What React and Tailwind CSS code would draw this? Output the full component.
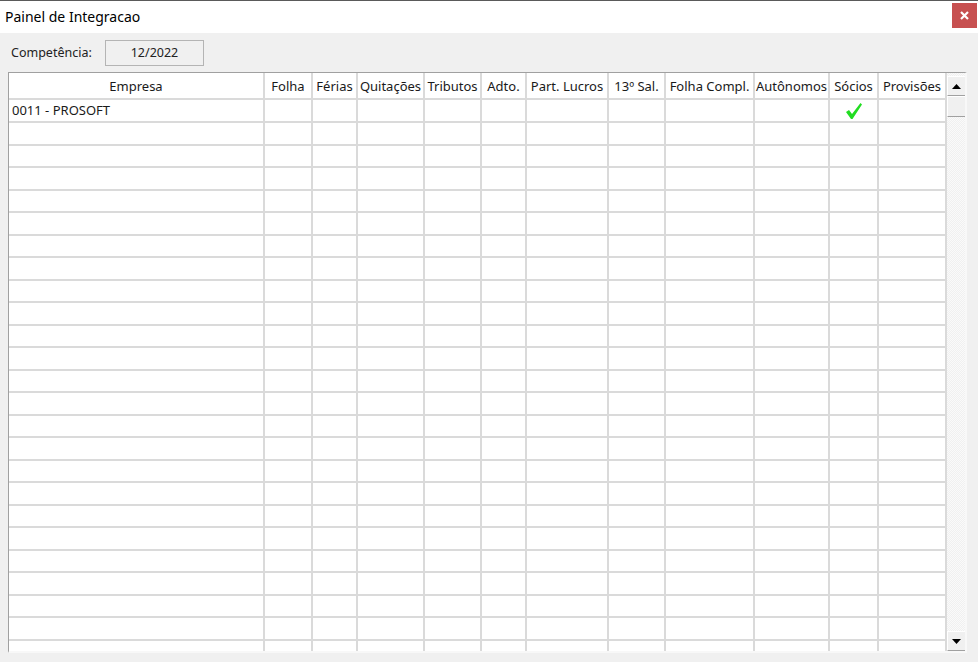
import React from "react";

const cols = [
  { name: "Empresa", w: "w-[256px]" },
  { name: "Folha", w: "w-[48px]" },
  { name: "Férias", w: "w-[45px]" },
  { name: "Quitações", w: "w-[67px]" },
  { name: "Tributos", w: "w-[57px]" },
  { name: "Adto.", w: "w-[45px]" },
  { name: "Part. Lucros", w: "w-[82px]" },
  { name: "13º Sal.", w: "w-[57px]" },
  { name: "Folha Compl.", w: "w-[89px]" },
  { name: "Autônomos", w: "w-[75px]" },
  { name: "Sócios", w: "w-[49px]" },
  { name: "Provisões", w: "w-[68px]" },
];

function Check() {
  return (
    <svg width="18" height="18" viewBox="0 0 18 18">
      <polygon points="1,10 4,8 7,12 15.5,1 17,2.5 7.5,17 6,17" fill="#22dd22" />
    </svg>
  );
}

function Row({ i }) {
  const h = i === 0 ? "h-[23px]" : i % 2 === 1 ? "h-[23px]" : "h-[22px]";
  return (
    <div className={`flex shrink-0 ${h}`}>
      {cols.map((c, j) => (
        <div
          key={j}
          className={`${c.w} shrink-0 border-r-2 border-b-2 border-[#dadada] bg-white flex items-center ${
            j === 0 ? "pl-[3px]" : "justify-center"
          }`}
        >
          {i === 0 && j === 0 ? "0011 - PROSOFT" : null}
          {i === 0 && j === 10 ? <Check /> : null}
        </div>
      ))}
    </div>
  );
}

function ScrollBtn({ up }) {
  return (
    <div className="h-[20px] w-full shrink-0 bg-[#f0f0f0] border-t border-l border-white border-r border-b border-r-[#a0a0a0] border-b-[#a0a0a0] flex items-center justify-center">
      <svg width="9" height="5" viewBox="0 0 9 5">
        {up ? (
          <polygon points="0,5 9,5 4.5,0" fill="#000" />
        ) : (
          <polygon points="0,0 9,0 4.5,5" fill="#000" />
        )}
      </svg>
    </div>
  );
}

export default function App() {
  const rows = Array.from({ length: 26 }, (_, i) => i);
  return (
    <div
      className="w-[978px] h-[662px] flex flex-col bg-[#f0f0f0] overflow-hidden text-[#1a1a1a]"
      style={{ fontFamily: '"Noto Sans", "Open Sans", sans-serif' }}
    >
      {/* title bar */}
      <div className="h-[33px] shrink-0 bg-white border-t border-[#5a5a5a] flex items-center justify-between">
        <span className="pl-[5px] text-[14px] text-black pb-[1px]">Painel de Integracao</span>
        <div className="w-[25px] h-[25px] mr-[1px] mb-[4px] bg-[#c75050] flex items-center justify-center">
          <svg width="9" height="9" viewBox="0 0 9 9">
            <path d="M1 1 L8 8 M8 1 L1 8" stroke="#fff" strokeWidth="2.2" />
          </svg>
        </div>
      </div>

      {/* body */}
      <div className="flex-1 flex flex-col pl-[8px] pt-[7px] min-h-0">
        <div className="flex items-center h-[26px] shrink-0">
          <span className="pl-[3px] w-[97px] text-[12.5px] text-[#222]">Competência:</span>
          <div className="w-[99px] h-[26px] border border-[#b4b4b4] bg-[#f0f0f0] flex items-center justify-center text-[12.5px] text-[#222]">
            12/2022
          </div>
        </div>

        <div className="mt-[6px] w-[959px] h-[581px] shrink-0 flex border-l border-t border-[#a0a0a0] border-r-2 border-b-2 border-r-[#f8f8f8] border-b-[#f8f8f8] overflow-hidden text-[13px]">
          <div className="flex flex-col w-[938px] shrink-0 overflow-hidden">
            <div className="flex h-[27px] shrink-0">
              {cols.map((c, j) => (
                <div
                  key={j}
                  className={`${c.w} shrink-0 border-r-2 border-b-2 border-[#dadada] bg-white flex items-center justify-center whitespace-nowrap pt-[3px]`}
                >
                  {c.name}
                </div>
              ))}
            </div>
            {rows.map((i) => (
              <Row key={i} i={i} />
            ))}
          </div>
          <div className="w-[19px] shrink-0 flex flex-col bg-[repeating-conic-gradient(#f0f0f0_0_25%,#fafafa_0_50%)] bg-[length:2px_2px] pt-[3px]">
            <ScrollBtn up />
            <div className="h-[21px] w-full shrink-0 bg-[#f0f0f0] border-t border-l border-white border-r border-b border-r-[#a0a0a0] border-b-[#a0a0a0]" />
            <div className="flex-1" />
            <ScrollBtn />
          </div>
        </div>
      </div>
    </div>
  );
}
